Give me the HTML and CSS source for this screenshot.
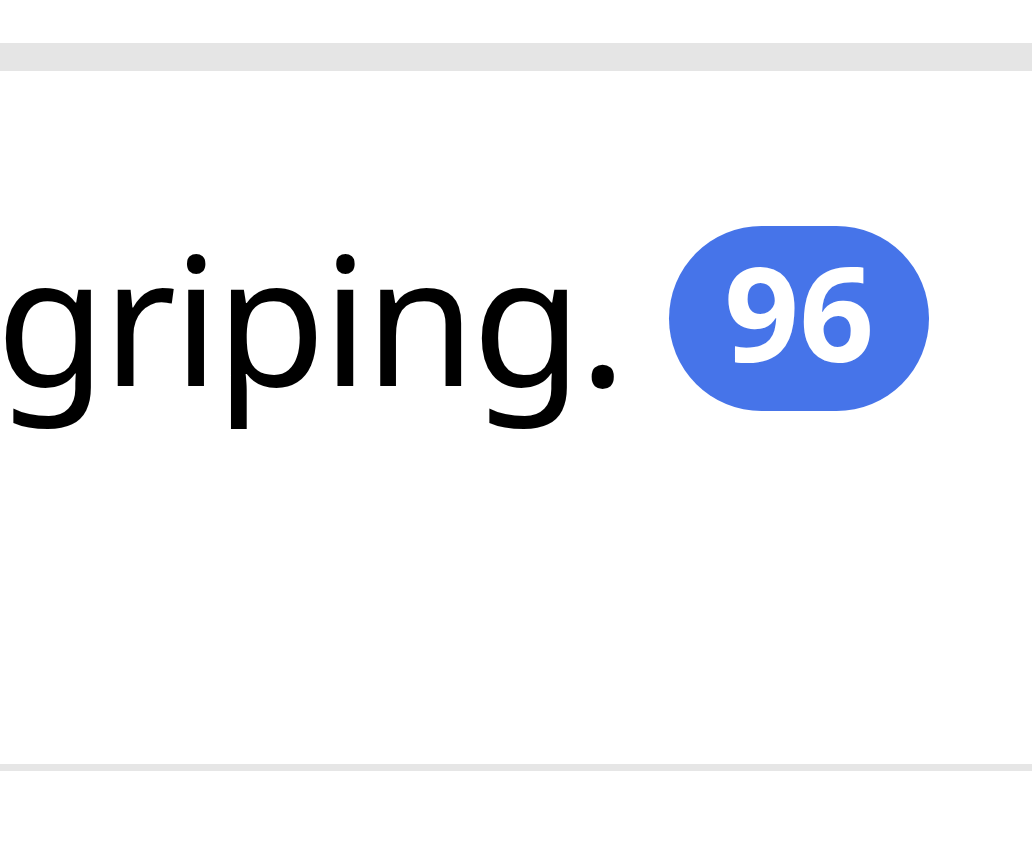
FILE: index.html
```html
<!DOCTYPE html>
<html lang="en">

<head>
    <meta charset="utf-8">
    <meta name="viewport" content="width=device-width, initial-scale=1.0">
    <title>Comment</title>
    <link rel="stylesheet" href="styles.css">
</head>

<body>
    <div class="top-bar"></div>
    <div class="item">
        <div class="row">
            <span class="text">griping.</span>
            <span class="badge">96</span>
        </div>
    </div>
</body>

</html>
```

FILE: styles.css
```css
body {
    margin: 0;
    background-color: #ffffff;
    font-family: 'Noto Sans', 'Open Sans', sans-serif;
    overflow: hidden;
}

.top-bar {
    margin-top: 43px;
    height: 28px;
    background-color: #e5e5e5;
}

.item {
    padding-top: 153px;
    height: 540px;
    border-bottom: 7px solid #e6e6e6;
}

.row {
    display: flex;
    align-items: flex-start;
    gap: 46px;
    margin-left: -4px;
}

.text {
    font-size: 179px;
    letter-spacing: -3.5px;
    line-height: 185px;
    color: #000000;
    white-space: nowrap;
}

.badge {
    margin-top: 2px;
    width: 260px;
    height: 185px;
    border-radius: 93px;
    background-color: #4674e9;
    color: #ffffff;
    font-weight: 700;
    font-size: 131px;
    line-height: 170px;
    text-align: center;
}
```
